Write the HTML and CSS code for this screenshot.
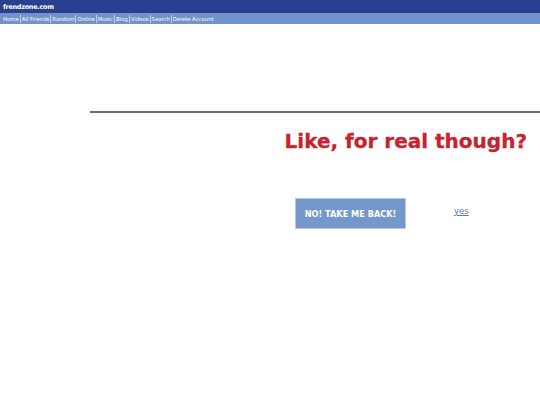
FILE: index.html
```html
<!DOCTYPE html>
<html>
<head>
<meta charset="utf-8">
<link rel="stylesheet" href="styles.css">
</head>
<body>
<div class="topbar"><span class="brand">frendzone.com</span></div>
<div class="nav">
  <a class="nav-item">Home</a><a class="nav-item">All Friends</a><a class="nav-item">Random</a><a class="nav-item">Online</a><a class="nav-item">Music</a><a class="nav-item">Blog</a><a class="nav-item">Videos</a><a class="nav-item">Search</a><a class="nav-item last">Delete Account</a>
</div>
<div class="content">
  <div class="rule"></div>
  <h1 class="title">Like, for real though?</h1>
  <div class="actions">
    <button class="back-btn">NO! TAKE ME BACK!</button>
    <a class="yes-link" href="#">yes</a>
  </div>
</div>
</body>
</html>
```
FILE: styles.css
```css
html, body {
  margin: 0;
  padding: 0;
  background: #ffffff;
  font-family: "DejaVu Sans", Verdana, sans-serif;
}
.topbar {
  height: 13px;
  background: #2b3f90;
  display: flex;
  align-items: center;
  padding-left: 3px;
}
.brand {
  color: #ffffff;
  font-weight: bold;
  font-size: 6.5px;
  letter-spacing: -0.3px;
}
.nav {
  height: 11px;
  background: #7192cb;
  display: flex;
  align-items: center;
  padding-left: 2px;
}
.nav-item {
  color: #ffffff;
  font-size: 5.35px;
  padding: 0 1px;
  border-right: 1px solid #c4d0e8;
  line-height: 8px;
}
.nav-item.last {
  border-right: none;
}
.content {
  padding-left: 90px;
  padding-top: 87px;
}
.rule {
  height: 2px;
  background: #6e6e6e;
}
.title {
  margin: 15px 13px 0 0;
  text-align: right;
  color: #c8222e;
  font-size: 20px;
  font-weight: bold;
  line-height: 26px;
  -webkit-text-stroke: 0.3px #c8222e;
}
.actions {
  display: flex;
  align-items: center;
  margin-top: 44px;
  padding-left: 205px;
}
.back-btn {
  width: 111px;
  height: 31px;
  background: #7398c9;
  border: 1px solid #b8cbe6;
  color: #ffffff;
  font-family: "DejaVu Sans", Verdana, sans-serif;
  font-weight: bold;
  font-size: 8.2px;
  padding: 0;
}
.yes-link {
  margin-left: 48px;
  margin-bottom: 6px;
  color: #5a7ab8;
  font-size: 8.5px;
  text-decoration: underline;
}
```
